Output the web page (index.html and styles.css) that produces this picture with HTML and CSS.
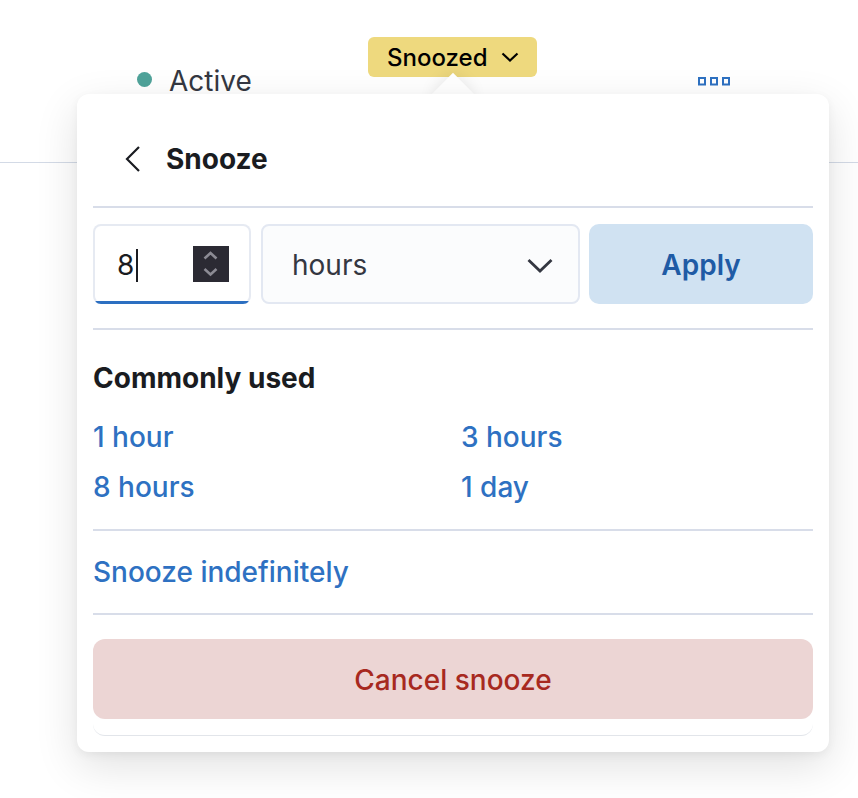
FILE: index.html
```html
<!DOCTYPE html>
<html lang="en">
<head>
<meta charset="utf-8">
<title>Snooze</title>
<link rel="stylesheet" href="styles.css">
</head>
<body>
<div class="page">
  <div class="table-row">
    <div class="cell status-cell">
      <span class="status-dot"></span>
      <span class="status-text">Active</span>
    </div>
    <div class="cell badge-cell">
      <button class="badge"><span>Snoozed</span>
        <svg class="badge-chevron" width="18" height="11" viewBox="0 0 18 11"><path d="M1.5 1.5 L9 8.5 L16.5 1.5" fill="none" stroke="#000" stroke-width="2.2"/></svg>
      </button>
    </div>
    <div class="cell dots-cell">
      <svg width="34" height="9" viewBox="0 0 34 9"><rect x="1" y="1" width="6" height="6.5" fill="none" stroke="#2e71c2" stroke-width="2"/><rect x="13" y="1" width="6" height="6.5" fill="none" stroke="#2e71c2" stroke-width="2"/><rect x="25" y="1" width="6" height="6.5" fill="none" stroke="#2e71c2" stroke-width="2"/></svg>
    </div>
  </div>

  <div class="popover">
    <div class="arrow"></div>
    <div class="panel">
      <div class="panel-header">
        <svg class="back" width="16" height="26" viewBox="0 0 16 26"><path d="M14 1 L2 13 L14 25" fill="none" stroke="#1a1c21" stroke-width="2.2"/></svg>
        <span class="title">Snooze</span>
      </div>
      <div class="rule"></div>
      <div class="controls">
        <div class="num-field">
          <span class="num-value">8</span><span class="caret"></span>
          <span class="spinner">
            <svg width="36" height="36" viewBox="0 0 36 36"><path d="M11.5 12.5 L17.5 7 L23.5 12.5" fill="none" stroke="#8c8b94" stroke-width="2.6"/><path d="M11.5 23 L17.5 28.5 L23.5 23" fill="none" stroke="#8c8b94" stroke-width="2.6"/></svg>
          </span>
        </div>
        <div class="select-field">
          <span class="select-value">hours</span>
          <svg width="26" height="15" viewBox="0 0 26 15"><path d="M1.5 2 L13 13 L24.5 2" fill="none" stroke="#343741" stroke-width="2.8"/></svg>
        </div>
        <button class="apply">Apply</button>
      </div>
      <div class="rule rule-gap"></div>
      <div class="section">
        <div class="section-title">Commonly used</div>
        <div class="common-grid">
          <a class="link">1 hour</a>
          <a class="link">3 hours</a>
          <a class="link">8 hours</a>
          <a class="link">1 day</a>
        </div>
      </div>
      <div class="rule"></div>
      <div class="single">
        <a class="link">Snooze indefinitely</a>
      </div>
      <div class="rule"></div>
      <div class="footer">
        <button class="cancel">Cancel snooze</button>
      </div>
    </div>
  </div>
</div>
</body>
</html>
```

FILE: styles.css
```css
* { box-sizing: border-box; }
html, body { margin: 0; padding: 0; background: #ffffff; }
body {
  font-family: Inter, "Noto Sans", "Liberation Sans", sans-serif;
  color: #343741;
  width: 858px;
  height: 798px;
  overflow: hidden;
}
.page { position: relative; width: 858px; height: 798px; }

.table-row {
  display: grid;
  grid-template-columns: 368px 170px 1fr;
  height: 163px;
  border-bottom: 1px solid #d3dae6;
}
.cell { display: flex; align-items: flex-start; }
.status-cell { padding-top: 64px; padding-left: 137px; }
.status-dot {
  width: 15px; height: 15px; border-radius: 50%;
  background: #4fa39a;
  margin-top: 8px;
  margin-right: 17px;
  flex-shrink: 0;
}
.status-text { font-size: 28px; line-height: 34px; color: #343741; }
.badge-cell { padding-top: 37px; }
.badge {
  display: flex; align-items: center;
  height: 40px; width: 169px;
  padding: 0 0 0 19px;
  border: none; border-radius: 6px;
  background: #eed97e;
  font-family: inherit; font-size: 24px; font-weight: 500; color: #000;
}
.badge-chevron { display: block; flex-shrink: 0; margin-left: 13px; margin-top: 1px; }
.dots-cell { padding-top: 77px; padding-left: 160px; }
.dots-cell svg { display: block; }

.popover { position: absolute; left: 77px; top: 94px; width: 752px; }
.arrow {
  position: absolute;
  left: 361px; top: -15px;
  width: 30px; height: 30px;
  background: #fff;
  transform: rotate(45deg);
  box-shadow: 0 0 16px rgba(0,0,0,0.10);
}
.panel {
  position: relative;
  background: #fff;
  border-radius: 12px;
  padding: 0 16px 16px;
  box-shadow: 0 14px 44px rgba(0,0,0,0.12), 0 3px 10px rgba(0,0,0,0.05);
}
.panel-header {
  display: flex; align-items: center;
  padding: 40px 0 22px 32px;
  height: 112px;
}
.back { display: block; margin-right: 25px; }
.title { font-size: 28px; font-weight: 700; color: #1a1c21; line-height: 50px; }
.rule { height: 2px; background: #d8dde9; }
.rule-gap { margin-top: 24px; }

.controls {
  display: flex; gap: 10px;
  margin-top: 16px;
  height: 80px;
}
.num-field {
  position: relative;
  width: 158px; height: 80px;
  display: flex; align-items: center;
  padding-left: 22px;
  border: 2px solid #e6eaf2;
  border-bottom-color: transparent;
  border-radius: 8px;
  background: #fff linear-gradient(#2c6fc1, #2c6fc1) no-repeat left bottom / 100% 3px;
  background-origin: border-box;
  font-size: 28px; color: #1a1c21;
}
.num-value { line-height: 34px; padding-top: 2px; }
.caret { width: 1.5px; height: 33px; background: #1a1c21; margin-left: 2px; margin-top: 2px; }
.spinner {
  margin-left: auto; margin-right: 20px;
  width: 36px; height: 36px;
  background: #2b2a33;
  display: block;
}
.spinner svg { display: block; }
.select-field {
  width: 319px; height: 80px;
  display: flex; align-items: center; justify-content: space-between;
  padding: 2px 25px 0 29px;
  border: 2px solid #e3e8f2;
  border-radius: 8px;
  background: #fbfcfd;
  margin-right: -1px;
}
.select-value { font-size: 28px; color: #343741; }
.select-field svg { display: block; }
.apply {
  flex: 1;
  height: 80px;
  padding-top: 3px;
  border: none; border-radius: 10px;
  background: #d0e2f2;
  font-family: inherit; font-size: 28px; font-weight: 600; color: #1f5ba5;
}

.section { padding: 31px 0 25px; }
.section-title { font-size: 28px; line-height: 34px; font-weight: 700; color: #1a1c21; }
.common-grid {
  display: grid;
  grid-template-columns: 1fr 1fr;
  column-gap: 16px;
  row-gap: 16px;
  margin-top: 25px;
}
.link { font-size: 28px; line-height: 34px; color: #2e71c2; font-weight: 500; text-decoration: none; }
.single { padding: 24px 0; }
.footer {
  padding: 24px 0 16px;
  border-bottom: 1px solid #e2e5ea;
  border-radius: 0 0 12px 12px;
}
.cancel {
  display: block; width: 100%; height: 80px;
  padding-top: 2px;
  border: none; border-radius: 12px;
  background: #ecd5d4;
  font-family: inherit; font-size: 28px; font-weight: 500; color: #a7291f;
}
```
